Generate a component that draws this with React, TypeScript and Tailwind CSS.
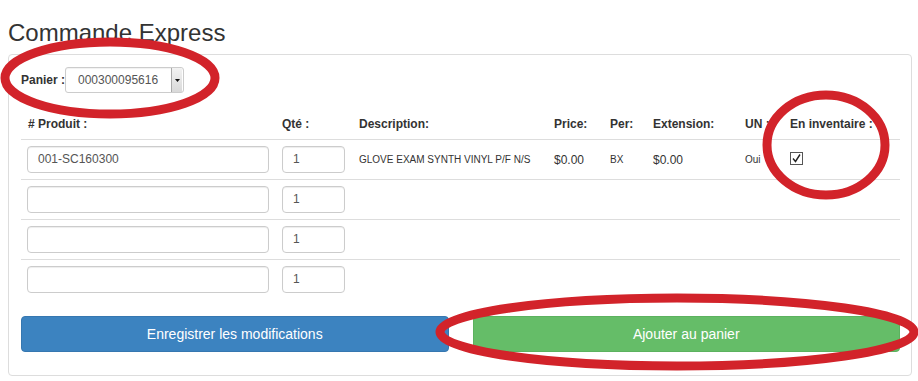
const rows = [
  { produit: '001-SC160300', qte: '1', description: 'GLOVE EXAM SYNTH VINYL P/F N/S', price: '$0.00', per: 'BX', extension: '$0.00', un: 'Oui', stock: true },
  { produit: '', qte: '1' },
  { produit: '', qte: '1' },
  { produit: '', qte: '1' },
];

function CheckedBox() {
  return (
    <svg width="13" height="13" viewBox="0 0 13 13" className="block">
      <rect x="0.5" y="0.5" width="12" height="12" fill="#fff" stroke="#555" strokeWidth="1" />
      <path d="M3 6.5 L5.5 9.5 L10 2.5" fill="none" stroke="#222" strokeWidth="1.4" />
    </svg>
  );
}

export default function App() {
  return (
    <div className="relative w-[918px] h-[381px] overflow-hidden bg-white text-[#333] font-['Liberation_Sans',Arial,sans-serif]">
      <h1 className="ml-[8px] mt-[19px] text-[24px] leading-[28px] font-normal text-[#333]">Commande Express</h1>

      <div className="ml-[8px] mt-[7px] w-[904px] border border-[#ddd] rounded-[4px] pt-[12px] pl-[12px] pr-[11px] pb-[23px]">
        {/* Panier */}
        <div className="flex items-center h-[26px]">
          <span className="text-[12px] font-bold w-[44px]">Panier :</span>
          <div className="flex w-[119px] h-[26px] border border-[#ccc] rounded-[3px] shadow-[inset_0_1px_1px_rgba(0,0,0,0.06)]">
            <span className="flex-1 text-[12px] text-[#555] leading-[24px] pl-[12px]">000300095616</span>
            <div className="w-[11px] mr-[1px] border-l border-[#aaa] bg-gradient-to-b from-[#f2f2f2] to-[#d9d9d9] flex items-center justify-center">
              <svg width="5" height="3" viewBox="0 0 5 3"><path d="M0 0 H5 L2.5 3 Z" fill="#111" /></svg>
            </div>
          </div>
        </div>

        {/* Table */}
        <div className="mt-[7px] text-[12px]">
          <div className="flex items-end h-[39px] pb-[6px] font-bold leading-[17px]">
            <div className="w-[255px] pl-[7px]"># Produit :</div>
            <div className="w-[77px] pl-[6px]">Qté :</div>
            <div className="w-[195px] pl-[6px]">Description:</div>
            <div className="w-[56px] pl-[6px]">Price:</div>
            <div className="w-[43px] pl-[6px]">Per:</div>
            <div className="w-[92px] pl-[6px]">Extension:</div>
            <div className="w-[45px] pl-[6px]">UN :</div>
            <div className="flex-1 pl-[6px]">En inventaire :</div>
          </div>
          {rows.map((r, i) => (
            <div key={i} className="flex items-center h-[40px] border-t border-[#ddd]">
              <div className="w-[255px] pl-[6px]">
                <div className="w-[242px] h-[27px] border border-[#ccc] rounded-[4px] shadow-[inset_0_1px_1px_rgba(0,0,0,0.075)] pl-[10px] text-[12px] leading-[25px] text-[#555]">
                  {r.produit}
                </div>
              </div>
              <div className="w-[77px] pl-[6px]">
                <div className="w-[63px] h-[27px] border border-[#ccc] rounded-[4px] shadow-[inset_0_1px_1px_rgba(0,0,0,0.075)] pl-[10px] text-[12px] leading-[25px] text-[#555]">
                  {r.qte}
                </div>
              </div>
              {r.description && (
                <>
                  <div className="w-[195px] pl-[6px] text-[10px]">{r.description}</div>
                  <div className="w-[56px] pl-[6px] text-[12px]">{r.price}</div>
                  <div className="w-[43px] pl-[6px] text-[10px]">{r.per}</div>
                  <div className="w-[92px] pl-[6px] text-[12px]">{r.extension}</div>
                  <div className="w-[45px] pl-[6px] text-[10px]">{r.un}</div>
                  <div className="flex-1 pl-[6px] pb-[2px]">{r.stock && <CheckedBox />}</div>
                </>
              )}
            </div>
          ))}
        </div>

        {/* Buttons */}
        <div className="mt-[17px] grid grid-cols-2 gap-[24px]">
          <button className="h-[36px] rounded-[4px] bg-[#3c83c0] border border-[#3677b0] text-white text-[14px]">
            Enregistrer les modifications
          </button>
          <button className="h-[36px] rounded-[4px] bg-[#65bd68] border border-[#5cb25f] text-white text-[14px]">
            Ajouter au panier
          </button>
        </div>
      </div>

      {/* Annotations */}
      <svg className="absolute inset-0 pointer-events-none" width="918" height="381" viewBox="0 0 918 381">
        <ellipse cx="110" cy="78" rx="105" ry="36" fill="none" stroke="#d2232a" strokeWidth="9" />
        <ellipse cx="826" cy="145" rx="59" ry="50" fill="none" stroke="#d2232a" strokeWidth="9" />
        <ellipse cx="677" cy="332" rx="237" ry="34" fill="none" stroke="#d2232a" strokeWidth="9" />
      </svg>
    </div>
  );
}
